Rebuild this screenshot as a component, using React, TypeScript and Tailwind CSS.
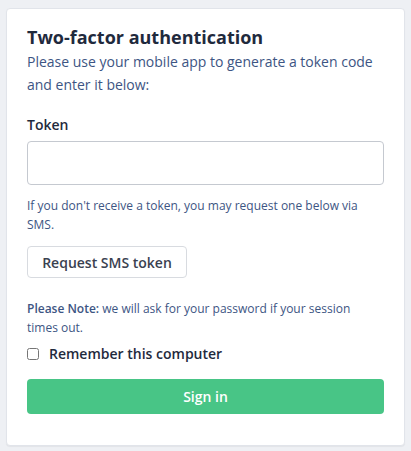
export default function App() {
  return (
    <div className="min-h-[451px] bg-[#eef0f4] px-[6px] pt-[8px] pb-[7px] font-['Open_Sans',sans-serif]">
      <div className="rounded-[4px] border border-[#e1e4ea] bg-white px-[20px] pt-[16px] pb-[31px] shadow-[0_1px_1px_rgba(0,0,0,0.05)]">
        <h1 className="text-[18px] font-bold leading-[24px] text-[#1f2a3d]">Two-factor authentication</h1>
        <p className="mt-[1px] text-[14px] leading-[23px] text-[#3d5583]">
          Please use your mobile app to generate a token code and enter it below:
        </p>

        <label className="mt-[19px] block text-[14px] font-semibold leading-[20px] text-[#1f2a3d]">Token</label>
        <input
          type="text"
          className="mt-[6px] block h-[44px] w-full rounded-[4px] border border-[#c5c9d0] bg-white px-3 outline-none"
        />
        <p className="mt-[11px] text-[12px] leading-[19px] text-[#3d5583]">
          If you don't receive a token, you may request one below via SMS.
        </p>

        <button
          type="button"
          className="mt-[12px] block h-[32px] w-[160px] rounded-[4px] border border-[#d8dbe0] bg-white text-[14px] font-semibold text-[#3a4150]"
        >
          Request SMS token
        </button>

        <p className="mt-[21px] text-[12px] leading-[19px] text-[#3d5583]">
          <span className="font-semibold">Please Note:</span> we will ask for your password if your session times out.
        </p>

        <label className="mt-[7px] flex items-center gap-[10px]">
          <input type="checkbox" className="h-[12px] w-[12px] rounded-[3px] border border-[#9aa1ac]" />
          <span className="text-[14px] font-semibold leading-[20px] text-[#1f2a3d]">Remember this computer</span>
        </label>

        <button
          type="button"
          className="mt-[15px] block h-[35px] w-full rounded-[4px] bg-[#48c586] text-[14px] font-semibold text-white"
        >
          Sign in
        </button>
      </div>
    </div>
  );
}
